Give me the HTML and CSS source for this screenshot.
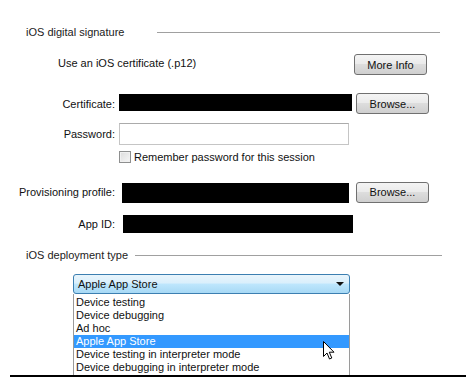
FILE: index.html
```html
<!DOCTYPE html>
<html lang="en">
<head>
    <meta charset="UTF-8">
    <title>iOS settings</title>
    <link rel="stylesheet" href="styles.css">
</head>
<body>
    <div class="panel">
        <div class="group-title first">
            <span>iOS digital signature</span>
            <div class="rule"></div>
        </div>

        <div class="row row-cert-type">
            <span class="note">Use an iOS certificate (.p12)</span>
            <button class="win-button">More Info</button>
        </div>

        <div class="row row-cert">
            <label>Certificate:</label>
            <div class="redacted"></div>
            <button class="win-button">Browse...</button>
        </div>

        <div class="row row-pass">
            <label>Password:</label>
            <div class="text-box"></div>
        </div>

        <div class="check-row">
            <span class="check-box"></span>
            <span>Remember password for this session</span>
        </div>

        <div class="row row-prov">
            <label>Provisioning profile:</label>
            <div class="redacted"></div>
            <button class="win-button">Browse...</button>
        </div>

        <div class="row row-app">
            <label>App ID:</label>
            <div class="redacted"></div>
        </div>

        <div class="group-title second">
            <span>iOS deployment type</span>
            <div class="rule"></div>
        </div>

        <div class="combo">
            <div class="combo-head">
                <span>Apple App Store</span>
                <span class="combo-arrow"></span>
            </div>
            <ul class="combo-list">
                <li>Device testing</li>
                <li>Device debugging</li>
                <li>Ad hoc</li>
                <li class="selected">Apple App Store</li>
                <li>Device testing in interpreter mode</li>
                <li>Device debugging in interpreter mode</li>
            </ul>
            <svg class="cursor" width="12" height="19" viewBox="0 0 12 19">
                <path d="M0.5 0.5 L0.5 15.5 L4 12 L6.5 18 L8.8 17 L6.3 11.2 L11 11.2 Z" fill="#fff" stroke="#000" stroke-width="1"/>
            </svg>
        </div>
    </div>
    <div class="bottom-bar"></div>
</body>
</html>
```

FILE: styles.css
```css
* {
    margin: 0;
    padding: 0;
    box-sizing: border-box;
}

body {
    font-family: 'Liberation Sans', Arial, sans-serif;
    font-size: 11px;
    color: #111;
    background: #fff;
    width: 466px;
    height: 377px;
    overflow: hidden;
}

.panel {
    padding-top: 25px;
    height: 375px;
}

.group-title {
    display: flex;
    align-items: center;
    height: 14px;
    padding-left: 26px;
    color: #222;
}

.group-title .rule {
    flex: 1;
    border-top: 1px solid #a0a0a0;
}

.group-title.first .rule {
    margin-left: 33px;
    margin-right: 26px;
}

.group-title.second {
    margin-top: 15px;
}

.group-title.second .rule {
    margin-left: 7px;
    margin-right: 24px;
}

.row {
    display: grid;
    grid-template-columns: 115px 233px 73px;
    column-gap: 4px;
    align-items: center;
}

.row label {
    text-align: right;
    white-space: nowrap;
}

.row-cert-type {
    margin-top: 15px;
    grid-template-columns: 58px 296px 73px;
    column-gap: 0;
}

.row-cert-type .note {
    grid-column: 2;
    margin-top: -3px;
}

.win-button {
    height: 21px;
    width: 73px;
    font-family: inherit;
    font-size: 11px;
    color: #111;
    border: 1px solid #707070;
    border-radius: 3px;
    background: linear-gradient(#f4f4f4, #ebebeb 45%, #dddddd 50%, #cfcfcf);
}

.row-cert {
    margin-top: 18px;
}

.row-cert .redacted {
    height: 17px;
    margin-top: -3px;
}

.redacted {
    background: #000;
}

.row-pass {
    margin-top: 9px;
    grid-template-columns: 115px 230px;
}

.text-box {
    height: 22px;
    border: 1px solid #c5c5c5;
    border-top-color: #ababab;
    background: #fff;
}

.check-row {
    display: flex;
    align-items: center;
    gap: 3px;
    margin-top: 6px;
    padding-left: 119px;
    height: 12px;
}

.check-box {
    width: 12px;
    height: 12px;
    border: 1px solid #8e8f8f;
    background: linear-gradient(135deg, #dcdcdc, #f6f6f6);
    box-shadow: inset 0 0 0 1px #f0f0f0;
}

.row-prov {
    margin-top: 18px;
    grid-template-columns: 115px 227px 72px;
    column-gap: 7px;
}

.row-prov .redacted {
    height: 20px;
    margin-top: 2px;
}

.row-app {
    margin-top: 12px;
    grid-template-columns: 115px 230px;
    column-gap: 8px;
}

.row-app .redacted {
    height: 18px;
}

.combo {
    position: relative;
    margin-top: 12px;
    margin-left: 73px;
    width: 277px;
}

.combo-head {
    display: flex;
    align-items: center;
    justify-content: space-between;
    height: 20px;
    padding: 0 5px 0 4px;
    border: 1px solid #3c7fb1;
    border-radius: 3px;
    background: linear-gradient(#e9f5fc, #d9effc 45%, #bee6fd 50%, #a7d9f5);
}

.combo-arrow {
    width: 0;
    height: 0;
    border-left: 4px solid transparent;
    border-right: 4px solid transparent;
    border-top: 4px solid #111;
}

.combo-list {
    list-style: none;
    height: 81px;
    border: 1px solid #9a9a9a;
    border-top: none;
    border-bottom: none;
    padding-top: 2px;
}

.combo-list li {
    height: 13px;
    line-height: 13px;
    padding-left: 2px;
    white-space: nowrap;
}

.combo-list li.selected {
    background: #3399ff;
    color: #fff;
}

.cursor {
    position: absolute;
    left: 250px;
    top: 67px;
}

.bottom-bar {
    height: 2px;
    margin-left: 10px;
    background: #000;
}
```
